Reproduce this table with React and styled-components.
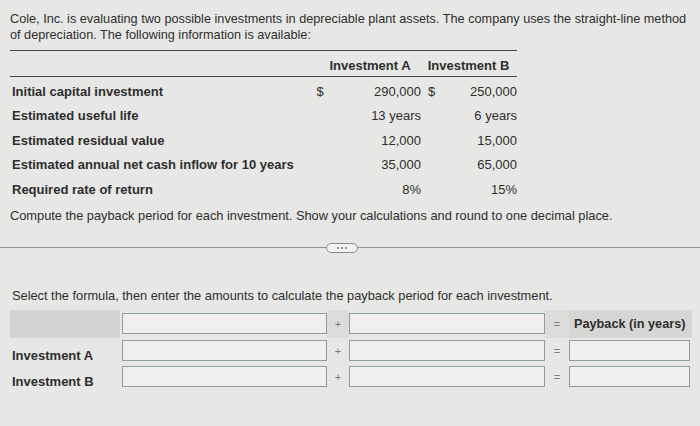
import React from 'react';
import styled, {createGlobalStyle} from 'styled-components';

const GlobalStyle = createGlobalStyle`
    body {
        margin: 0;
        background: #e7e7e5;
        font-family: "Liberation Sans", Arial, sans-serif;
        color: #2e2e2e;
    }
`;

const Page = styled.div`
    width: 700px;
    height: 426px;
    overflow: hidden;
    box-sizing: border-box;
    padding-top: 11px;
    font-size: 13px;
`;

const Intro = styled.p`
    margin: 0 0 0 10px;
    font-size: 12.7px;
    line-height: 16px;
    white-space: nowrap;
`;

const TableHead = styled.div`
    display: grid;
    grid-template-columns: 310px 100px 97px;
    width: 507px;
    margin: 7px 0 0 10px;
    border-top: 1.5px solid #4a4a4a;
    border-bottom: 1.5px solid #4a4a4a;
`;

const HeadCell = styled.div`
    height: 25px;
    display: flex;
    align-items: flex-end;
    justify-content: center;
    padding-bottom: 2px;
    box-sizing: border-box;
    font-weight: bold;
    line-height: 16px;
`;

const TableBody = styled.div`
    display: grid;
    grid-template-columns: 300px 20px 91px 16px 80px;
    grid-auto-rows: 24.5px;
    width: 507px;
    margin: 2px 0 0 10px;
`;

const Cell = styled.div`
    display: flex;
    align-items: center;
    justify-content: ${p => p.$align || 'flex-start'};
    padding-left: ${p => p.$indent || 0}px;
    font-weight: ${p => p.$bold ? 'bold' : 'normal'};
    white-space: nowrap;
`;

const Instruction = styled.p`
    margin: ${p => p.$top}px 0 0 ${p => p.$left}px;
    font-size: 12.8px;
    line-height: 16px;
    white-space: nowrap;
`;

const Divider = styled.div`
    display: flex;
    align-items: center;
    height: 10px;
    margin-top: 19px;
`;

const Rule = styled.div`
    height: 1.5px;
    background: #959593;
    width: ${p => p.$width ? p.$width + 'px' : 'auto'};
    flex: ${p => p.$width ? 'none' : 1};
`;

const Pill = styled.div`
    width: 30px;
    height: 8px;
    border: 1px solid #8c8c8a;
    border-radius: 5px;
    background: #f1f1ef;
    display: flex;
    align-items: center;
    justify-content: center;
    gap: 2px;
`;

const Dot = styled.span`
    width: 2px;
    height: 2px;
    border-radius: 50%;
    background: #777;
`;

const FormGrid = styled.div`
    display: grid;
    grid-template-columns: 112px 205px 22px 196px 24px 123px;
    grid-template-rows: 28px 26px 26px;
    margin: 6px 0 0 10px;
`;

const RowLabel = styled.div`
    display: flex;
    align-items: ${p => p.$head ? 'center' : 'flex-end'};
    padding-left: 2px;
    margin-right: 2px;
    background: ${p => p.$head ? '#d4d4d2' : 'transparent'};
    font-weight: bold;
    line-height: 16px;
`;

const InputCell = styled.div`
    display: flex;
    align-items: center;
`;

const AmountInput = styled.input`
    width: ${p => p.$width ? p.$width + 'px' : '100%'};
    height: 21px;
    box-sizing: border-box;
    border: 1.5px solid #8b9ca3;
    background: #efefed;
    outline: none;
    margin: 0;
    padding: 0 4px;
`;

const Operator = styled.div`
    display: flex;
    align-items: center;
    justify-content: center;
    background: ${p => p.$head ? '#dcdcda' : 'transparent'};
    color: #7a7a7a;
    font-size: 11px;
`;

const PaybackHead = styled.div`
    display: flex;
    align-items: center;
    padding-left: 5px;
    background: #d6d6d4;
    font-size: 12.7px;
    font-weight: bold;
`;

const rows = [
    ['Initial capital investment', '$', '290,000', '$', '250,000'],
    ['Estimated useful life', '', '13 years', '', '6 years'],
    ['Estimated residual value', '', '12,000', '', '15,000'],
    ['Estimated annual net cash inflow for 10 years', '', '35,000', '', '65,000'],
    ['Required rate of return', '', '8%', '', '15%'],
];

const App = () => {
    return (
        <Page>
            <GlobalStyle />
            <Intro>
                Cole, Inc. is evaluating two possible investments in depreciable plant assets. The company uses the straight-line method<br />
                of depreciation. The following information is available:
            </Intro>

            <TableHead>
                <HeadCell />
                <HeadCell>Investment A</HeadCell>
                <HeadCell>Investment B</HeadCell>
            </TableHead>
            <TableBody>
                {rows.map(([label, d1, a, d2, b]) => (
                    <React.Fragment key={label}>
                        <Cell $bold $indent={2}>{label}</Cell>
                        <Cell $align="center">{d1}</Cell>
                        <Cell $align="flex-end">{a}</Cell>
                        <Cell $indent={7}>{d2}</Cell>
                        <Cell $align="flex-end">{b}</Cell>
                    </React.Fragment>
                ))}
            </TableBody>

            <Instruction $top={6} $left={10}>
                Compute the payback period for each investment. Show your calculations and round to one decimal place.
            </Instruction>

            <Divider>
                <Rule $width={326} />
                <Pill><Dot /><Dot /><Dot /></Pill>
                <Rule />
            </Divider>

            <Instruction $top={35} $left={12}>
                Select the formula, then enter the amounts to calculate the payback period for each investment.
            </Instruction>

            <FormGrid>
                <RowLabel $head />
                <InputCell><AmountInput /></InputCell>
                <Operator $head>+</Operator>
                <InputCell><AmountInput /></InputCell>
                <Operator $head>=</Operator>
                <PaybackHead>Payback (in years)</PaybackHead>

                {['Investment A', 'Investment B'].map(name => (
                    <React.Fragment key={name}>
                        <RowLabel>{name}</RowLabel>
                        <InputCell><AmountInput /></InputCell>
                        <Operator>+</Operator>
                        <InputCell><AmountInput /></InputCell>
                        <Operator>=</Operator>
                        <InputCell><AmountInput $width={121} /></InputCell>
                    </React.Fragment>
                ))}
            </FormGrid>
        </Page>
    );
};

export default App;
